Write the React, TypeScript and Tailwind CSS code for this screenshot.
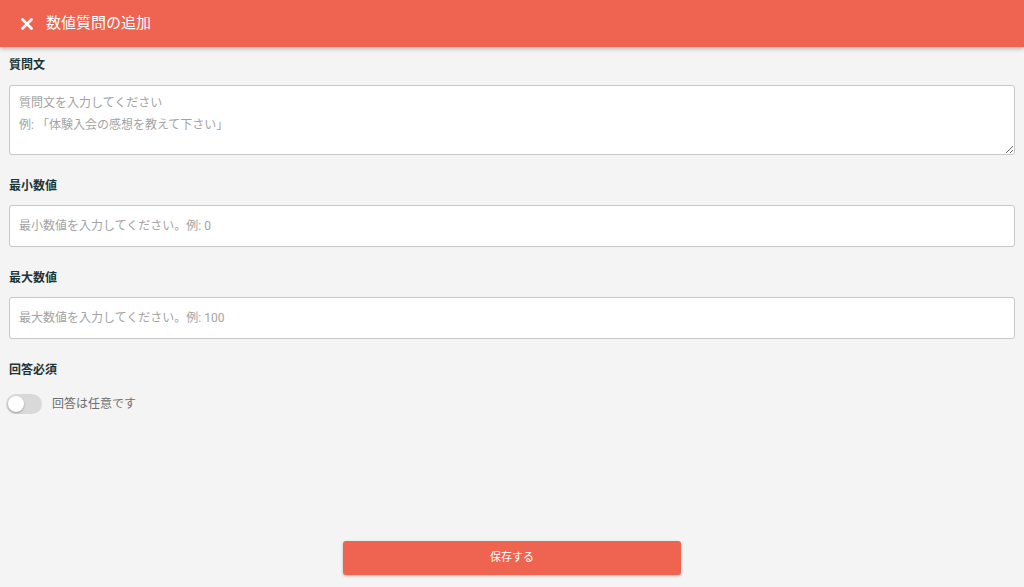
import React, { useState } from "react";

function Field({ label, placeholder }: { label: string; placeholder: string }) {
  return (
    <div>
      <div className="text-[12px] font-bold text-[#1d3535] leading-[16px] mb-[11px]">{label}</div>
      <input
        className="w-full h-[42px] bg-white border border-[#c8c8c8] rounded-[3px] px-[9px] text-[12px] placeholder:text-[#a3a3a3] outline-none"
        placeholder={placeholder}
      />
    </div>
  );
}

function App() {
  const [required, setRequired] = useState(false);
  return (
    <div
      className="min-h-[587px] h-[587px] bg-[#f4f4f4] flex flex-col"
      style={{ fontFamily: '"Roboto", "Noto Sans CJK JP", sans-serif' }}
    >
      <div className="h-[47px] bg-[#ef6451] flex items-center shadow-[0_2px_4px_rgba(0,0,0,0.25)] relative z-10">
        <svg className="ml-[21px] w-[12px] h-[12px]" viewBox="0 0 12 12">
          <path d="M1.5 1.5 L10.5 10.5 M10.5 1.5 L1.5 10.5" stroke="white" strokeWidth="2.6" strokeLinecap="round" />
        </svg>
        <span className="ml-[13px] text-white text-[15px]">数値質問の追加</span>
      </div>

      <div className="px-[9px] pt-[10px] flex flex-col flex-1">
        <div className="text-[12px] font-bold text-[#1d3535] leading-[16px] mb-[12px]">質問文</div>
        <textarea
          className="w-full h-[70px] bg-white border border-[#c8c8c8] rounded-[3px] px-[9px] pt-[6px] text-[12px] leading-[22px] placeholder:text-[#a3a3a3] outline-none"
          placeholder={"質問文を入力してください\n例: 「体験入会の感想を教えて下さい」"}
        />

        <div className="mt-[23px] flex flex-col gap-[23px]">
          <Field label="最小数値" placeholder="最小数値を入力してください。例: 0" />
          <Field label="最大数値" placeholder="最大数値を入力してください。例: 100" />
        </div>

        <div className="mt-[23px]">
          <div className="text-[12px] font-bold text-[#1d3535] leading-[16px]">回答必須</div>
          <div className="flex items-center mt-[16px] -ml-[3px]">
            <button
              onClick={() => setRequired(!required)}
              className={
                "w-[36px] h-[20px] rounded-full relative " + (required ? "bg-[#f4a59a]" : "bg-[#d9d9d9]")
              }
            >
              <span
                className={
                  "absolute top-[2px] w-[16px] h-[16px] rounded-full bg-white shadow-[0_1px_2px_rgba(0,0,0,0.3)] " +
                  (required ? "left-[18px]" : "left-[2px]")
                }
              />
            </button>
            <span className="ml-[10px] text-[12px] text-[#6e6e6e]">{required ? "回答は必須です" : "回答は任意です"}</span>
          </div>
        </div>

        <div className="flex-1" />
        <div className="flex justify-center pb-[12px]">
          <button className="w-[338px] h-[34px] bg-[#ef6451] rounded-[3px] text-white text-[11px] shadow-[0_1px_3px_rgba(0,0,0,0.25)]">
            保存する
          </button>
        </div>
      </div>
    </div>
  );
}

export default App;
